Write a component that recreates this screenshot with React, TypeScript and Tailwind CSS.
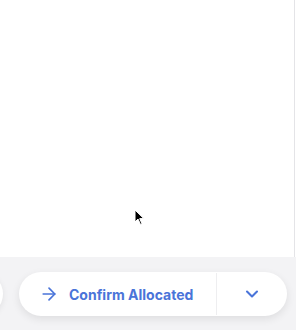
import React from 'react';
import { ArrowRight, ChevronDown } from 'lucide-react';

export default function App() {
  return (
    <div className="relative flex h-[330px] w-[296px] flex-col overflow-hidden bg-white font-['Inter',sans-serif]">
      {/* Content area */}
      <div className="mr-[1px] h-[257px] border-r border-[#e4e4e7]" />

      {/* Action bar */}
      <div className="flex flex-1 items-start overflow-hidden bg-[#f3f3f5] pt-[15px]">
        <div className="flex shrink-0 items-center gap-4">
          <div className="ml-[-97px] h-[44px] w-[100px] rounded-full bg-white shadow-[0_2px_6px_rgba(0,0,0,0.08)]" />
          <div className="flex h-[44px] w-[268px] items-stretch rounded-full bg-white shadow-[0_3px_8px_rgba(0,0,0,0.09)]">
            <button className="flex flex-1 items-center gap-[10px] pl-[20px] text-[14px] font-bold text-[#4a74d9]">
              <ArrowRight className="h-[20px] w-[20px]" strokeWidth={2} />
              <span>Confirm Allocated</span>
            </button>
            <div className="my-[1px] w-px bg-[#eeeef0]" />
            <button className="flex w-[70px] items-center justify-center text-[#4a74d9]">
              <ChevronDown className="h-5 w-5" strokeWidth={2.5} />
            </button>
          </div>
        </div>
      </div>

      {/* Mouse cursor */}
      <svg className="absolute left-[134px] top-[209px]" width="11" height="17" viewBox="0 0 11 17">
        <path d="M1 1 L1 13 L4 10 L6.5 15.5 L8 14.8 L5.7 9.6 L9.8 9.6 Z" fill="#000" stroke="#fff" strokeWidth="1" />
      </svg>
    </div>
  );
}
